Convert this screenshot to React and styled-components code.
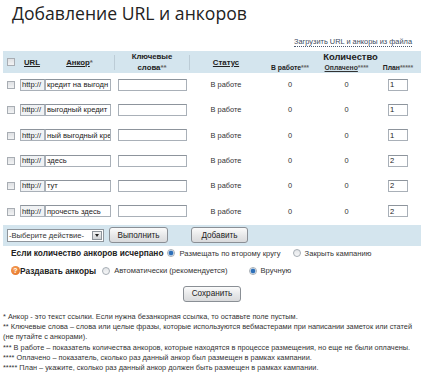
import React from "react";
import styled, { createGlobalStyle } from "styled-components";

const Global = createGlobalStyle`
  html, body {
    margin: 0;
    background: #fff;
  }
  body {
    font-family: "Liberation Sans", Arial, sans-serif;
    color: #222;
  }
`;

const Page = styled.div`
  width: 424px;
  height: 376px;
  overflow: hidden;
  padding: 0 3px;
  box-sizing: border-box;
`;

const Title = styled.h1`
  margin: 0;
  padding: 1px 0 0 9px;
  height: 32px;
  font-family: "Open Sans", sans-serif;
  font-weight: 400;
  font-size: 17.6px;
  line-height: 24px;
  color: #222;
`;

const TopLinkRow = styled.div`
  display: flex;
  justify-content: flex-end;
  padding-right: 9px;
  height: 18px;
  align-items: center;
`;

const DottedLink = styled.a`
  font-size: 7.4px;
  color: #3a4a60;
  text-decoration: none;
  border-bottom: 1px dotted #4a5a70;
  line-height: 9px;
`;

const Table = styled.table`
  width: 418px;
  border-collapse: collapse;
  table-layout: fixed;
  font-size: 7.4px;
`;

const Head = styled.thead`
  background: #d4e5ee;
`;

const Th = styled.th`
  padding: 0;
  font-weight: 700;
  font-size: ${(p) => (p.$big ? "9.4px" : p.$small ? "6.8px" : "7.8px")};
  line-height: ${(p) => (p.$small ? "10px" : "11px")};
  text-align: center;
  color: #222;
  vertical-align: middle;
  background-image: ${(p) =>
    p.$sep
      ? "linear-gradient(#bcccd6, #bcccd6), linear-gradient(#bcccd6, #bcccd6)"
      : "none"};
  background-size: 1px 15px, 1px 15px;
  background-position: left center, right center;
  background-repeat: no-repeat;
  padding-left: ${(p) => p.$pl || 0}px;
  white-space: nowrap;
`;

const HeadLink = styled.span`
  text-decoration: underline;
  color: ${(p) => (p.$dim ? "#333" : "#222")};
`;

const Star = styled.span`
  color: #666;
  font-weight: 700;
`;

const Row = styled.tr`
  height: 25.3px;
`;

const Td = styled.td`
  padding: 0 0 2px;
  vertical-align: middle;
  text-align: ${(p) => p.$align || "center"};
  padding-left: ${(p) => p.$pl || 0}px;
  color: #333;
  white-space: nowrap;
  overflow: hidden;
`;

const Box = styled.span`
  display: inline-block;
  width: 8px;
  height: 8px;
  box-sizing: border-box;
  border: 1px solid #a8adb3;
  background: linear-gradient(#dfe1e4, #f2f3f4);
  vertical-align: middle;
`;

const Field = styled.input`
  box-sizing: border-box;
  width: ${(p) => p.$w}px;
  height: 12px;
  padding: 0 0 0 1px;
  margin: 0;
  border: 1px solid #a9b0b8;
  border-top-color: #8d949c;
  font-family: "Liberation Sans", Arial, sans-serif;
  font-size: 7.6px;
  color: #222;
  background: ${(p) => (p.$gray ? "#f0f2f4" : "#fff")};
  vertical-align: middle;
  outline: none;
`;

const BarRow = styled.tr`
  background: #d4e5ee;
  height: 21px;
`;

const BarInner = styled.div`
  display: flex;
  align-items: center;
  gap: 5px;
  padding-left: 3px;
`;

const SelectBox = styled.div`
  display: flex;
  align-items: center;
  width: 97px;
  height: 13px;
  box-sizing: border-box;
  border: 1px solid #8e959c;
  background: #fff;
  font-size: 7.6px;
  color: #333;
  padding-left: 1px;
  justify-content: space-between;
`;

const Arrow = styled.span`
  width: 10px;
  height: 9px;
  margin-right: 1px;
  border: 1px solid #8e959c;
  background: linear-gradient(#f2f2f2, #cfd2d5);
  display: flex;
  align-items: center;
  justify-content: center;
  box-sizing: border-box;
  &::after {
    content: "";
    border-left: 2.5px solid transparent;
    border-right: 2.5px solid transparent;
    border-top: 3px solid #222;
  }
`;

const Button = styled.button`
  width: ${(p) => p.$w}px;
  height: 16px;
  margin-left: ${(p) => p.$ml || 0}px;
  padding: 0;
  border: 1px solid #8a8f95;
  border-radius: 3px;
  background: linear-gradient(#fbfbfb, #e6e7e8 55%, #d9dadc);
  font-family: "Liberation Sans", Arial, sans-serif;
  font-size: 8.2px;
  color: #222;
`;

const OptionLine = styled.div`
  display: flex;
  align-items: center;
  height: ${(p) => p.$h}px;
  padding-left: 8px;
  font-size: 7.6px;
  color: #333;
  white-space: nowrap;
`;

const OptionLabel = styled.span`
  font-weight: 700;
  font-size: 8.3px;
  color: #222;
  margin-right: ${(p) => p.$mr}px;
`;

const Help = styled.span`
  display: inline-flex;
  align-items: center;
  justify-content: center;
  width: 9px;
  height: 9px;
  border-radius: 50%;
  background: radial-gradient(circle at 40% 35%, #f7a25a, #e0681c);
  color: #fff;
  font-size: 7px;
  font-weight: 700;
  line-height: 9px;
`;

const Radio = styled.span`
  display: inline-block;
  width: 8px;
  height: 8px;
  border-radius: 50%;
  box-sizing: border-box;
  border: 1px solid #a6adb4;
  background: ${(p) =>
    p.$on
      ? "radial-gradient(circle, #2d6fb8 0 2px, #9cc0e6 2.4px, #eef2f6 3px)"
      : "linear-gradient(#e3e5e8, #f6f7f8)"};
  margin: 0 4px 0 ${(p) => p.$ml || 0}px;
`;

const SaveRow = styled.div`
  display: flex;
  justify-content: center;
  padding: 5px 0 0;
  height: 26px;
  box-sizing: border-box;
`;

const Notes = styled.div`
  padding-top: 5px;
  font-size: 7.35px;
  line-height: 10.3px;
  color: #333;
  white-space: nowrap;
`;

const rows = [
  { anchor: "кредит на выгодн", plan: 1 },
  { anchor: "выгодный кредит", plan: 1 },
  { anchor: "ный выгодный кре", plan: 1 },
  { anchor: "здесь", plan: 2 },
  { anchor: "тут", plan: 2 },
  { anchor: "прочесть здесь", plan: 2 },
];

export default function App() {
  return (
    <Page>
      <Global />
      <Title>Добавление URL и анкоров</Title>
      <TopLinkRow>
        <DottedLink href="#">Загрузить URL и анкоры из файла</DottedLink>
      </TopLinkRow>
      <Table>
        <colgroup>
          <col style={{ width: 16 }} />
          <col style={{ width: 26 }} />
          <col style={{ width: 69 }} />
          <col style={{ width: 76 }} />
          <col style={{ width: 72 }} />
          <col style={{ width: 56 }} />
          <col style={{ width: 57 }} />
          <col style={{ width: 46 }} />
        </colgroup>
        <Head>
          <tr>
            <Th rowSpan={2}>
              <Box />
            </Th>
            <Th rowSpan={2}>
              <HeadLink>URL</HeadLink>
            </Th>
            <Th rowSpan={2}>
              <HeadLink>Анкор</HeadLink>
              <Star>*</Star>
            </Th>
            <Th rowSpan={2} $sep>
              Ключевые
              <br />
              слова<Star>**</Star>
            </Th>
            <Th rowSpan={2}>
              <HeadLink>Статус</HeadLink>
            </Th>
            <Th colSpan={3} $big $pl={18}>
              Количество
            </Th>
          </tr>
          <tr>
            <Th $small>
              В работе<Star>***</Star>
            </Th>
            <Th $small>
              <HeadLink $dim>Оплачено</HeadLink>
              <Star>****</Star>
            </Th>
            <Th $small>
              План<Star>*****</Star>
            </Th>
          </tr>
        </Head>
        <tbody>
          {rows.map((r, i) => (
            <Row key={i}>
              <Td>
                <Box />
              </Td>
              <Td $align="left" $pl={1}>
                <Field $w={25} $gray readOnly defaultValue="http://" />
              </Td>
              <Td $align="left">
                <Field $w={66} readOnly defaultValue={r.anchor} />
              </Td>
              <Td $align="left" $pl={4}>
                <Field $w={69} readOnly defaultValue="" />
              </Td>
              <Td>В работе</Td>
              <Td>0</Td>
              <Td>0</Td>
              <Td>
                <Field $w={20} readOnly defaultValue={r.plan} />
              </Td>
            </Row>
          ))}
          <BarRow>
            <td colSpan={8}>
              <BarInner>
                <SelectBox>
                  -Выберите действие-
                  <Arrow />
                </SelectBox>
                <Button $w={59}>Выполнить</Button>
                <Button $w={57} $ml={18}>
                  Добавить
                </Button>
              </BarInner>
            </td>
          </BarRow>
        </tbody>
      </Table>
      <OptionLine $h={15}>
        <OptionLabel $mr={4}>Если количество анкоров исчерпано</OptionLabel>
        <Radio $on />
        Размещать по второму кругу
        <Radio $ml={12} />
        Закрыть кампанию
      </OptionLine>
      <OptionLine $h={20}>
        <Help>?</Help>
        <OptionLabel $mr={6}>Раздавать анкоры</OptionLabel>
        <Radio />
        Автоматически (рекомендуется)
        <Radio $ml={21} $on />
        Вручную
      </OptionLine>
      <SaveRow>
        <Button $w={58}>Сохранить</Button>
      </SaveRow>
      <Notes>
        * Анкор - это текст ссылки. Если нужна безанкорная ссылка, то оставьте поле пустым.
        <br />
        ** Ключевые слова – слова или целые фразы, которые используются вебмастерами при написании заметок или статей
        <br />
        (не путайте с анкорами).
        <br />
        *** В работе – показатель количества анкоров, которые находятся в процессе размещения, но еще не были оплачены.
        <br />
        **** Оплачено – показатель, сколько раз данный анкор был размещен в рамках кампании.
        <br />
        ***** План – укажите, сколько раз данный анкор должен быть размещен в рамках кампании.
      </Notes>
    </Page>
  );
}
